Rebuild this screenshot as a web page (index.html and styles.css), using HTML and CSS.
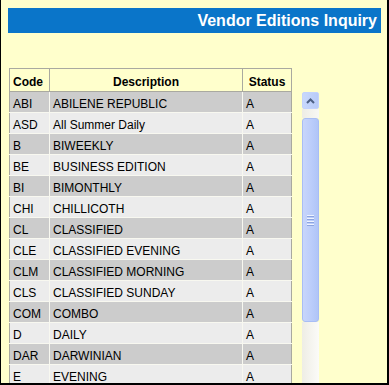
FILE: index.html
```html
<!DOCTYPE html>
<html>
<head>
<meta charset="utf-8">
<link rel="stylesheet" href="styles.css">
</head>
<body>
<div class="frame">
  <div class="title">Vendor Editions Inquiry</div>
  <div class="content">
    <table class="grid">
      <colgroup><col class="c1"><col class="c2"><col class="c3"></colgroup>
      <thead>
        <tr><th>Code</th><th>Description</th><th>Status</th></tr>
      </thead>
      <tbody>
        <tr class="odd"><td>ABI</td><td>ABILENE REPUBLIC</td><td>A</td></tr>
        <tr class="even"><td>ASD</td><td>All Summer Daily</td><td>A</td></tr>
        <tr class="odd"><td>B</td><td>BIWEEKLY</td><td>A</td></tr>
        <tr class="even"><td>BE</td><td>BUSINESS EDITION</td><td>A</td></tr>
        <tr class="odd"><td>BI</td><td>BIMONTHLY</td><td>A</td></tr>
        <tr class="even"><td>CHI</td><td>CHILLICOTH</td><td>A</td></tr>
        <tr class="odd"><td>CL</td><td>CLASSIFIED</td><td>A</td></tr>
        <tr class="even"><td>CLE</td><td>CLASSIFIED EVENING</td><td>A</td></tr>
        <tr class="odd"><td>CLM</td><td>CLASSIFIED MORNING</td><td>A</td></tr>
        <tr class="even"><td>CLS</td><td>CLASSIFIED SUNDAY</td><td>A</td></tr>
        <tr class="odd"><td>COM</td><td>COMBO</td><td>A</td></tr>
        <tr class="even"><td>D</td><td>DAILY</td><td>A</td></tr>
        <tr class="odd"><td>DAR</td><td>DARWINIAN</td><td>A</td></tr>
        <tr class="even"><td>E</td><td>EVENING</td><td>A</td></tr>
      </tbody>
    </table>
    <div class="scrollbar">
      <div class="btn-up">
        <svg width="9" height="6" viewBox="0 0 9 6"><path d="M1 5 L4.5 1.5 L8 5" fill="none" stroke="#4d6185" stroke-width="2"/></svg>
      </div>
      <div class="track-top"></div>
      <div class="thumb">
        <div class="grip"><span></span><span></span><span></span><span></span></div>
      </div>
      <div class="track"></div>
    </div>
  </div>
</div>
</body>
</html>
```
FILE: styles.css
```css
html, body {
  margin: 0;
  padding: 0;
  background: #ffffcc;
}
.frame {
  width: 389px;
  height: 385px;
  box-sizing: border-box;
  border-left: 1px solid #000;
  border-right: 2px solid #000;
  border-bottom: 2px solid #000;
  overflow: hidden;
  background: #ffffcc;
  font-family: "Liberation Sans", Arial, sans-serif;
}
.title {
  margin: 8px 6px 0 7px;
  height: 25px;
  background: #0a75c9;
  color: #fff;
  font-weight: bold;
  font-size: 16px;
  line-height: 25px;
  text-align: right;
  padding-right: 4px;
}
.content {
  display: flex;
  align-items: flex-start;
  margin: 35px 0 0 8px;
  gap: 10px;
}
.grid {
  border-collapse: collapse;
  table-layout: fixed;
  width: 282px;
  font-size: 12px;
  line-height: 14px;
  border: 1px solid #a9a9a0;
}
.c1 { width: 40px; }
.c2 { width: 193px; }
.c3 { width: 49px; }
.grid th {
  box-sizing: border-box;
  height: 23px;
  padding: 6px 3px 0;
  vertical-align: top;
  font-weight: bold;
  color: #000;
  border: 1px solid #a9a9a0;
  background: #ffffcc;
  text-align: center;
}
.grid th:first-child { text-align: left; }
.grid td {
  box-sizing: border-box;
  height: 21px;
  padding: 5px 3px 0;
  vertical-align: top;
  color: #000;
  border: 1px solid #f8f8f0;
  white-space: nowrap;
  overflow: hidden;
}
.grid td:first-child { border-left-color: #a9a9a0; }
.grid td:last-child { border-right-color: #a9a9a0; }
.odd td { background: #cccccc; }
.even td { background: #ececec; }
.scrollbar {
  margin-top: 24px;
  width: 17px;
  display: flex;
  flex-direction: column;
  height: 300px;
}
.btn-up {
  height: 17px;
  box-sizing: border-box;
  border: 1px solid #c3d3fd;
  border-radius: 2px;
  background: linear-gradient(to right, #c8d8fc, #b8cbf8);
  display: flex;
  align-items: center;
  justify-content: center;
}
.track-top {
  height: 9px;
  background: linear-gradient(to right, #eeede5, #f8f8f4);
}
.thumb {
  height: 204px;
  box-sizing: border-box;
  border: 1px solid #a8bdf5;
  border-radius: 3px;
  background: linear-gradient(to right, #c8d6fb, #baccfa 60%, #b0c5f7);
  display: flex;
  align-items: center;
  justify-content: center;
}
.grip {
  display: flex;
  flex-direction: column;
  gap: 1px;
}
.grip span {
  display: block;
  width: 7px;
  height: 1px;
  background: #eef3ff;
  border-bottom: 1px solid #8ca4e0;
}
.track {
  flex: 1;
  background: linear-gradient(to right, #eeede5, #fbfbf8);
}
```
